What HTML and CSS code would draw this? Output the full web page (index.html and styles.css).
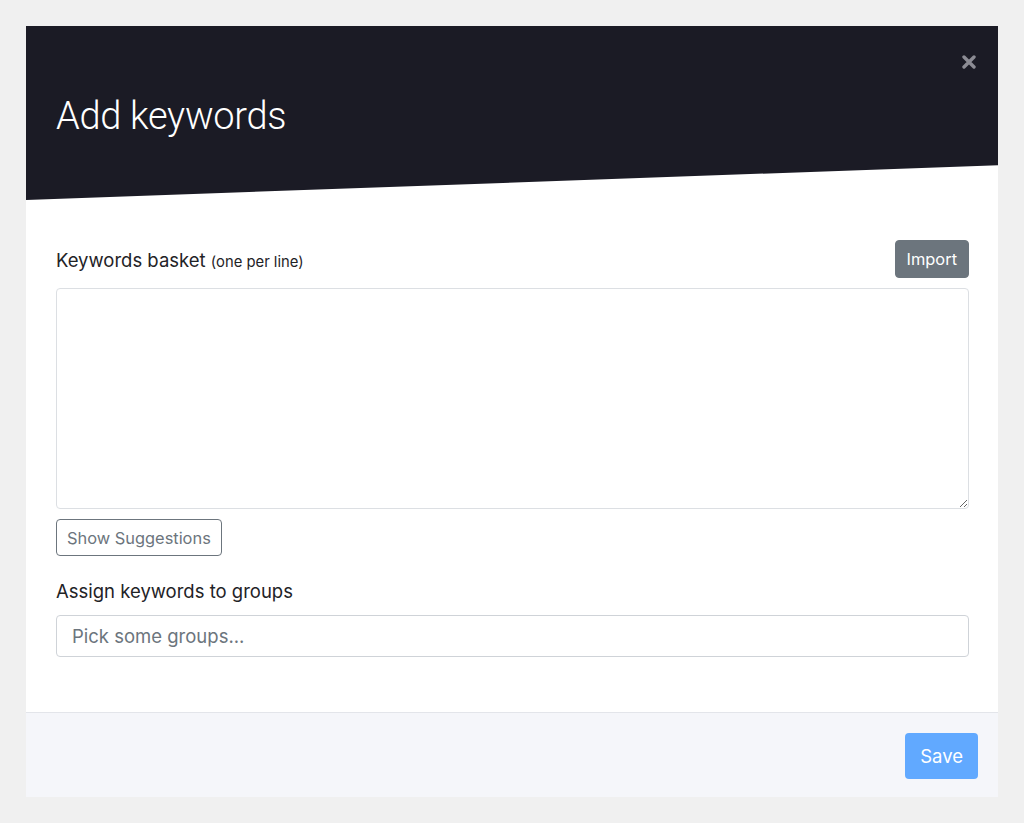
FILE: index.html
```html
<!DOCTYPE html>
<html>
<head>
  <title>Add keywords</title>
  <link rel="stylesheet" href="styles.css">
</head>
<body>
  <div class="modal">
    <div class="modal-header">
      <h1 class="modal-title">Add keywords</h1>
      <button class="close" aria-label="Close">
        <svg width="14" height="14" viewBox="0 0 14 14">
          <path d="M2 2 L12 12 M12 2 L2 12" stroke="currentColor" stroke-width="3.4" stroke-linecap="round"/>
        </svg>
      </button>
    </div>

    <div class="modal-body">
      <div class="label-row">
        <label class="field-label">Keywords basket <small>(one per line)</small></label>
        <button class="btn btn-secondary">Import</button>
      </div>
      <textarea class="form-control keywords-box"></textarea>
      <button class="btn btn-outline">Show Suggestions</button>

      <label class="field-label groups-label">Assign keywords to groups</label>
      <input class="form-control groups-input" type="text" placeholder="Pick some groups...">
    </div>

    <div class="modal-footer">
      <button class="btn btn-primary">Save</button>
    </div>
  </div>
</body>
</html>
```

FILE: styles.css
```css
body {
  margin: 0;
  padding: 26px;
  background-color: #f0f0f0;
  font-family: 'Inter', 'Liberation Sans', sans-serif;
  color: #212529;
}

.modal {
  background-color: #fff;
  display: flex;
  flex-direction: column;
  height: 771px;
}

.modal-header {
  position: relative;
  background-color: #1b1b25;
  height: 174px;
  padding: 68px 30px 0;
  box-sizing: border-box;
  clip-path: polygon(0 0, 100% 0, 100% 80%, 0 100%);
}

.modal-title {
  margin: 0;
  color: #fff;
  font-family: 'Roboto', 'Liberation Sans', sans-serif;
  font-weight: 300;
  font-size: 38px;
  line-height: 1.2;
  letter-spacing: -0.3px;
}

.close {
  position: absolute;
  top: 29px;
  right: 22px;
  padding: 0;
  border: none;
  background: none;
  color: #8c8c94;
  line-height: 0;
  cursor: pointer;
}

.modal-body {
  flex: 1;
  padding: 40px 29px 0 30px;
}

.label-row {
  display: flex;
  justify-content: space-between;
  align-items: center;
}

.label-row .field-label {
  padding-top: 4px;
}

.field-label {
  display: block;
  font-size: 18.5px;
  line-height: 27px;
  color: #1f2327;
}

.field-label small {
  font-size: 14.8px;
}

.btn {
  font-family: 'Inter', 'Liberation Sans', sans-serif;
  font-size: 16.4px;
  border-radius: 4px;
  cursor: pointer;
}

.btn-secondary {
  background-color: #6c757d;
  color: #fff;
  border: 1px solid #6c757d;
  height: 38px;
  padding: 0 11px;
}

.btn-outline {
  display: block;
  margin-top: 10px;
  background-color: #fff;
  color: #6c757d;
  border: 1px solid #6c757d;
  height: 37px;
  padding: 0 10px;
}

.form-control {
  display: block;
  width: 100%;
  box-sizing: border-box;
  border: 1px solid #dcdfe3;
  border-radius: 4px;
  font-family: 'Inter', 'Liberation Sans', sans-serif;
  font-size: 18.5px;
  color: #212529;
}

.keywords-box {
  margin-top: 10px;
  height: 221px;
  resize: vertical;
}

.groups-label {
  margin-top: 22px;
}

.groups-input {
  margin-top: 10px;
  height: 42px;
  padding: 0 15px;
  border-color: #cfd3d8;
}

.groups-input::placeholder {
  color: #6c757d;
}

.modal-footer {
  display: flex;
  justify-content: flex-end;
  background-color: #f5f6fa;
  border-top: 1px solid #e3e5ea;
  padding: 20px 20px 18px;
}

.btn-primary {
  background-color: #61a9ff;
  color: #fff;
  border: none;
  height: 46px;
  padding: 0 15px;
  font-size: 18.5px;
}
```
